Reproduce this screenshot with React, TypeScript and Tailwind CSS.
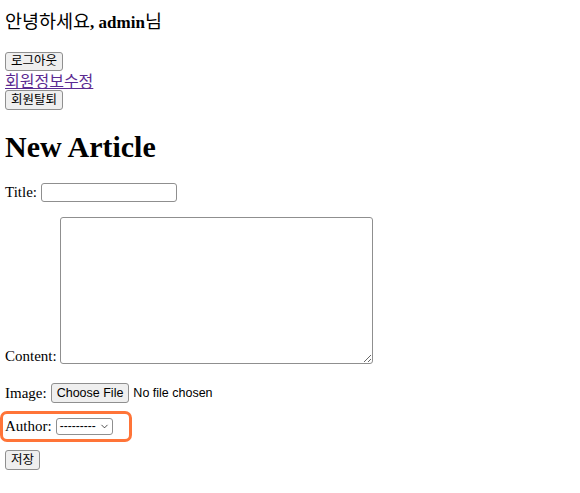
import { ChevronDown } from 'lucide-react';

const serif = "font-['Liberation_Serif','Noto_Sans_CJK_KR',serif]";
const korean = "font-['Noto_Sans_CJK_KR',sans-serif]";
const btn =
  "inline-flex items-center rounded-[3px] border border-[#8f8f8f] bg-[#efefef] px-[5px] font-['Liberation_Sans','Noto_Sans_CJK_KR',sans-serif] text-[12.5px] leading-none text-black";

export default function App() {
  return (
    <div className={`min-h-[493px] bg-white px-[5px] text-black ${serif}`}>
      <h3 className="pt-[10px] text-[17px] leading-[20px] font-bold">
        <span className={`${korean} text-[18.5px] font-normal`}>안녕하세요</span>, admin
        <span className={`${korean} text-[18.5px] font-normal`}>님</span>
      </h3>

      <div className="mt-[19px] flex flex-col items-start">
        <button className={`${btn} h-[19px]`}>로그아웃</button>
        <a href="#" className={`${korean} text-[16px] leading-[19px] text-[#5b2a91] underline`}>
          회원정보수정
        </a>
        <button className={`${btn} h-[20px]`}>회원탈퇴</button>
      </div>

      <h1 className="mt-[20px] text-[30px] leading-[34px] font-bold">New Article</h1>

      <form className="mt-[19px] flex flex-col items-start text-[15px]">
        <p className="flex h-[19px] items-center gap-[4px] leading-[19px]">
          Title:
          <input className="h-[19px] w-[136px] rounded-[3px] border border-[#8f8f8f]" />
        </p>
        <p className="mt-[15px] flex items-end gap-[3px] leading-[16px]">
          Content:
          <textarea className="block h-[147px] w-[313px] resize-y rounded-[3px] border border-[#8f8f8f]" />
        </p>
        <p className="mt-[19px] flex h-[20px] items-center gap-[4px] leading-[20px]">
          Image:
          <button type="button" className={`${btn} h-[20px]`}>
            Choose File
          </button>
          <span className="font-['Liberation_Sans',sans-serif] text-[12.5px]">No file chosen</span>
        </p>
        <div className="-ml-[5px] mt-[8px] h-[31px] w-[132px] rounded-[7px] border-[3px] border-[#ff7438] pl-[2px] pt-[4px]">
          <p className="flex h-[17px] items-center gap-[4px] leading-[17px]">
            Author:
            <span className="inline-flex h-[17px] w-[57px] items-center justify-between rounded-[3px] border border-[#8f8f8f] pl-[3px] pr-[2px] font-['Liberation_Sans',sans-serif] text-[12px]">
              ---------
              <ChevronDown size={11} strokeWidth={1.5} />
            </span>
          </p>
        </div>
        <button className={`${btn} mt-[8px] h-[20px]`}>저장</button>
      </form>
    </div>
  );
}
